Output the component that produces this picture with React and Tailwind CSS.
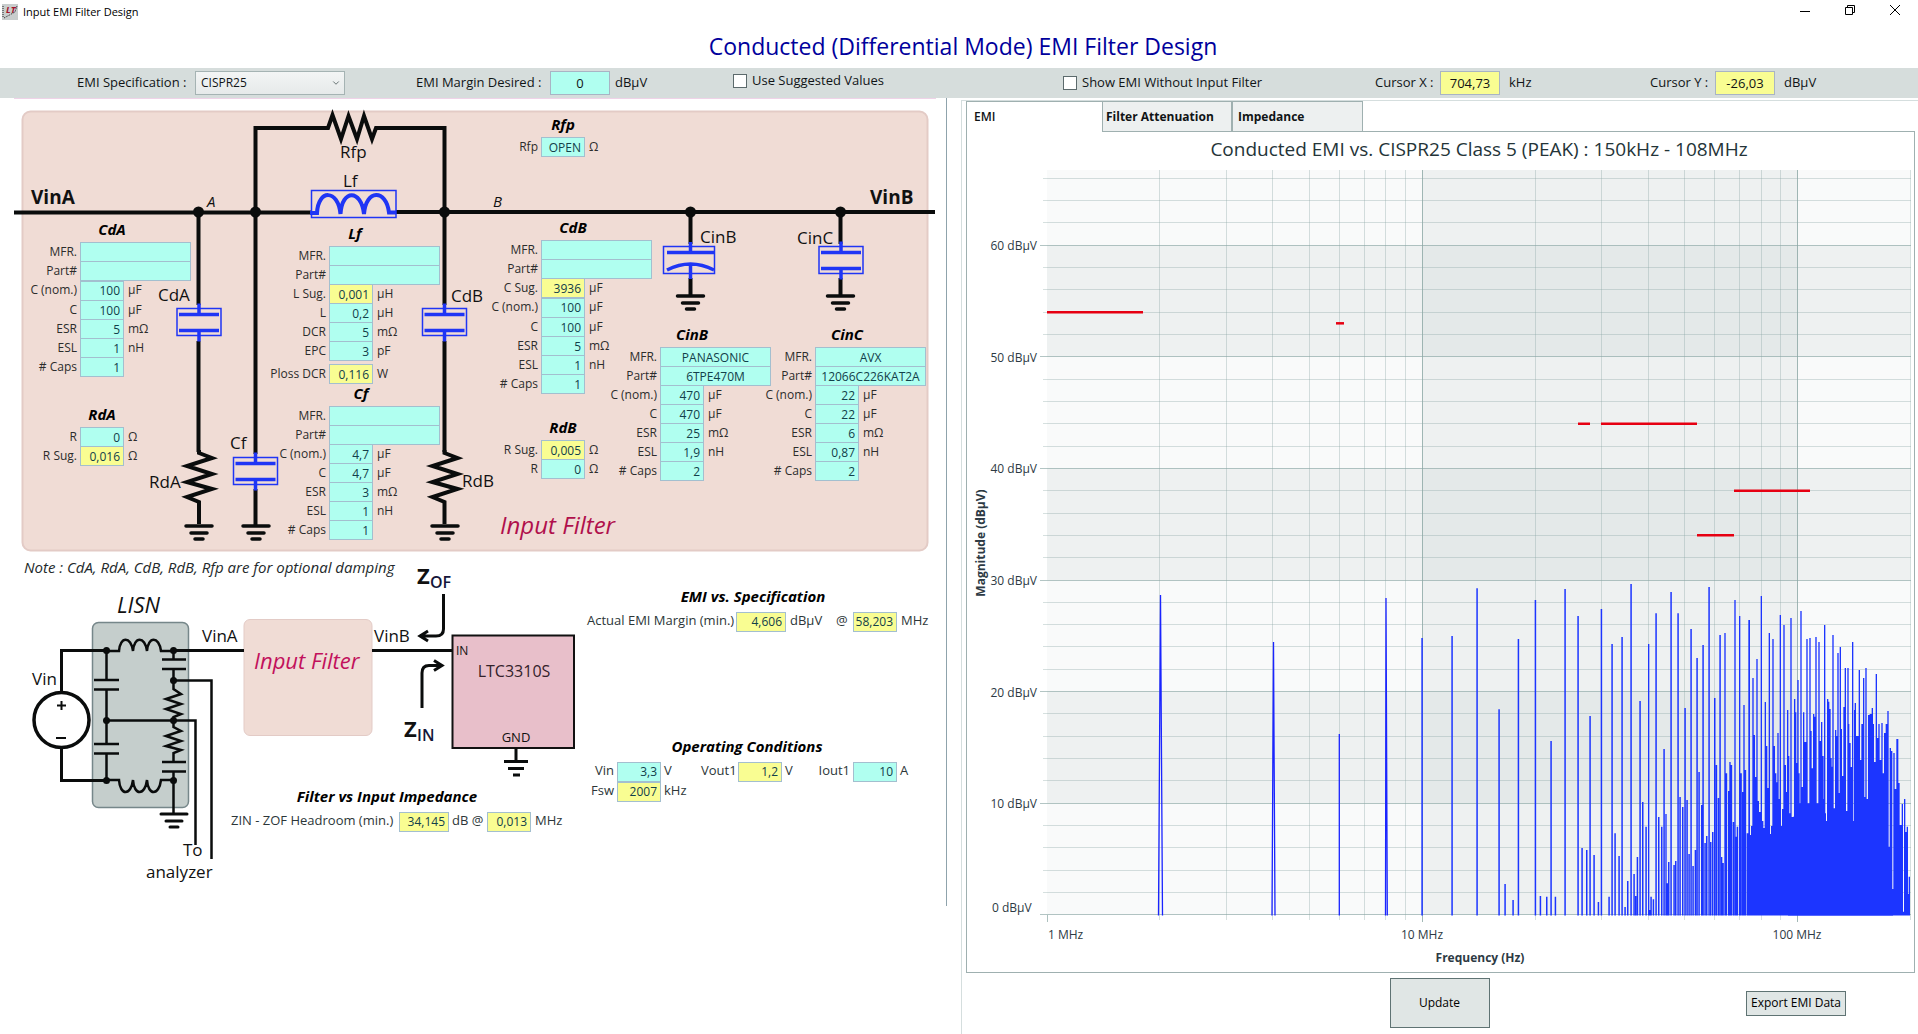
import React, { useId } from "react";
import { ChevronDown } from "lucide-react";

const CYAN = "bg-[#b0fff0]";
const YELLOW = "bg-[#f9fd92]";

/* ---------- small form parts ---------- */

function Box({ id, value, calc, wide, center, width, name }) {
  return (
    <input
      id={id}
      type="text"
      aria-label={name}
      defaultValue={value}
      readOnly={calc}
      className={`-mb-px h-5 shrink-0 border border-[#a3bfcf] p-0 text-xs text-[#12404a] outline-none ${
        calc ? YELLOW : CYAN
      } ${width || (wide ? "w-[111px]" : "w-[44px]")} ${wide || center ? "text-center" : "pr-[3px] text-right"}`}
    />
  );
}

function Row({ label, value, unit, calc, wide, tall, gap }) {
  const id = useId();
  return (
    <div className={`flex items-center ${tall ? "h-5" : "h-[19px]"} ${gap ? "mt-1" : ""}`}>
      <label htmlFor={id} className="w-[78px] shrink-0 pr-[3px] text-right text-xs text-[#2c2c2c]">
        {label}
      </label>
      <Box id={id} value={value} calc={calc} wide={wide} />
      {unit && <span className="pl-1 text-xs text-[#2c2c2c]">{unit}</span>}
    </div>
  );
}

function PartGroup({ title, rows, place, titleWidth = "w-16" }) {
  return (
    <section aria-label={title} className={`absolute ${place}`}>
      <h3 className={`ml-[78px] h-6 text-center text-[15px] leading-[22px] font-bold text-black italic ${titleWidth}`}>{title}</h3>
      {rows.map((r) => (
        <Row key={r.label} {...r} />
      ))}
    </section>
  );
}

const capRows = (nom, c, esr, esl, caps, mfr = "", part = "", tall = false) => [
  { label: "MFR.", value: mfr, wide: true },
  { label: "Part#", value: part, wide: true },
  { label: "C (nom.)", value: nom, unit: "µF", tall },
  { label: "C", value: c, unit: "µF" },
  { label: "ESR", value: esr, unit: "mΩ" },
  { label: "ESL", value: esl, unit: "nH" },
  { label: "# Caps", value: caps },
];

const cdbRows = capRows("100", "100", "5", "1", "1", "", "", true);
cdbRows.splice(2, 0, { label: "C Sug.", value: "3936", unit: "µF", calc: true });

const groups = [
  { title: "Rfp", place: "left-[463px] top-[15px]", titleWidth: "w-11", rows: [{ label: "Rfp", value: "OPEN", unit: "Ω" }] },
  { title: "CdA", place: "left-[2px] top-[120px]", rows: capRows("100", "100", "5", "1", "1", "", "", true) },
  {
    title: "RdA",
    place: "left-[2px] top-[305px]",
    titleWidth: "w-11",
    rows: [
      { label: "R", value: "0", unit: "Ω" },
      { label: "R Sug.", value: "0,016", unit: "Ω", calc: true },
    ],
  },
  {
    title: "Lf",
    place: "left-[251px] top-[124px]",
    titleWidth: "w-[52px]",
    rows: [
      { label: "MFR.", value: "", wide: true },
      { label: "Part#", value: "", wide: true },
      { label: "L Sug.", value: "0,001", unit: "µH", calc: true },
      { label: "L", value: "0,2", unit: "µH" },
      { label: "DCR", value: "5", unit: "mΩ" },
      { label: "EPC", value: "3", unit: "pF" },
      { label: "Ploss DCR", value: "0,116", unit: "W", calc: true, gap: true },
    ],
  },
  { title: "Cf", place: "left-[251px] top-[284px]", rows: capRows("4,7", "4,7", "3", "1", "1") },
  { title: "CdB", place: "left-[463px] top-[118px]", rows: cdbRows },
  {
    title: "RdB",
    place: "left-[463px] top-[318px]",
    titleWidth: "w-11",
    rows: [
      { label: "R Sug.", value: "0,005", unit: "Ω", calc: true },
      { label: "R", value: "0", unit: "Ω" },
    ],
  },
  { title: "CinB", place: "left-[582px] top-[225px]", rows: capRows("470", "470", "25", "1,9", "2", "PANASONIC", "6TPE470M") },
  { title: "CinC", place: "left-[737px] top-[225px]", rows: capRows("22", "22", "6", "0,87", "2", "AVX", "12066C226KAT2A") },
];

/* ---------- schematic ---------- */

const Ground = ({ x, y }) => (
  <path d={`M${x - 13} ${y}h26M${x - 8} ${y + 7}h16M${x - 4} ${y + 13}h8`} />
);

const Cap = ({ x, y }) => (
  <g stroke="#1f35f5" fill="none">
    <rect x={x - 22} y={y} width="44" height="27" strokeWidth="1.5" />
    <path d={`M${x} ${y - 5}v11M${x - 20} ${y + 6}h40M${x - 20} ${y + 22}h40M${x} ${y + 22}v11`} strokeWidth="3.5" />
  </g>
);

const Zig = ({ x, y }) => (
  <path d={`M${x} ${y}l0 3l13 5l-25 8l25 8l-25 8l25 7l-25 8l12 5v22`} strokeLinejoin="miter" />
);

function Schematic() {
  return (
    <svg viewBox="0 98 946 808" className="absolute inset-0 h-full w-full" aria-hidden="true">
      <path d="M14 98.500H936" stroke="#efd3e8" />
      <rect x="22.500" y="111.500" width="905" height="439" rx="8" fill="#f0dcd5" stroke="#e3cbc6" strokeWidth="2" />

      <g fill="none" stroke="#0a0c0c" strokeWidth="4">
        <path d="M14 212.500H312M396 212H935" />
        <path d="M255.500 212V128H328L332.500 115L341 139L348.500 116L357 139L364 116L372 139L376 128H444.500V212" />
        <path d="M198.500 212V305M198.500 341V452M444.500 212V305M444.500 341V452M255.500 212V454M255.500 489V526" />
        <path d="M690.500 212V244M690.500 278V296M840.500 212V244M840.500 278V296" />
        <Zig x={199} y={450} />
        <Zig x={444.5} y={450} />
        <g strokeWidth="3.5" strokeLinecap="round">
          <Ground x={199} y={526} />
          <Ground x={256} y={526} />
          <Ground x={445} y={526} />
          <Ground x={690.5} y={296} />
          <Ground x={840.5} y={296} />
        </g>
      </g>
      <g fill="#0a0c0c">
        {[198, 255, 444, 690, 840].map((x) => (
          <circle key={x} cx={x + 0.5} cy="212" r="5.5" />
        ))}
      </g>

      <Cap x={199} y={308.5} />
      <Cap x={444.5} y={308.5} />
      <Cap x={255.5} y={457.5} />
      <Cap x={841} y={246.5} />
      <g stroke="#1f35f5" fill="none">
        <rect x="663.500" y="246.500" width="51" height="27" strokeWidth="1.5" />
        <path d="M690.500 242V252M667 252.500H715M667 270Q690.500 258 714 270M690.500 264V279" strokeWidth="3.5" />
        <rect x="311.500" y="190.500" width="84.500" height="27" strokeWidth="1.5" />
        <path d="M310 213H317C318 189 338 189 340.500 214C342 189 361 189 364 214C366 189 386 189 389 212.500H396" strokeWidth="4" />
      </g>

      <g fill="#111" fontSize="17">
        <text x="340" y="158">Rfp</text>
        <text x="343" y="187">Lf</text>
        <text x="158" y="301">CdA</text>
        <text x="149" y="488">RdA</text>
        <text x="230" y="449">Cf</text>
        <text x="451" y="302">CdB</text>
        <text x="462" y="487">RdB</text>
        <text x="700" y="243">CinB</text>
        <text x="797" y="244">CinC</text>
        <text x="31" y="204" fontSize="19" fontWeight="700">VinA</text>
        <text x="870" y="204" fontSize="19" fontWeight="700">VinB</text>
        <text x="207" y="207" fontSize="15" fontStyle="italic">A</text>
        <text x="493" y="207" fontSize="15" fontStyle="italic">B</text>
      </g>
      <text x="500" y="534" fontSize="24" fontStyle="italic" fill="#b0104c">Input Filter</text>

      <rect x="244" y="619.500" width="128" height="116" rx="6" fill="#f0dcd5" stroke="#e3cbc6" />
      <text x="254" y="669" fontSize="22" fontStyle="italic" fill="#c2115c">Input Filter</text>

      <rect x="92.500" y="622.500" width="96" height="185" rx="6" fill="#c5cecc" stroke="#76878a" strokeWidth="1.500" />
      <g fill="none" stroke="#0a0c0c">
        <circle cx="61.500" cy="720" r="27.500" strokeWidth="3.5" fill="#fff" />
        <path d="M57 705.500h9M61.500 701v9M56 738h10" strokeWidth="2" />
        <path d="M61.500 692V650.500H106M61.500 748V780.500H106M174 650.500H244M372 650.500H452" strokeWidth="3" />
        <path
          d="M106 651H119C120 636 131 636 133 651C134 636 145 636 147 651C148 636 159 636 161 651H174M106 780H119C120 796 131 796 133 780C134 796 145 796 147 780C148 796 159 796 161 780H174"
          strokeWidth="2.5"
        />
        <path
          d="M106.500 651V680M94 680H119M94 689.500H119M106.500 690V744M94 744H119M94 753.500H119M106.500 754V780M106 720.500H195.500V845M173.500 680.500H211.500V859"
          strokeWidth="2.5"
        />
        <path
          d="M173.500 651V659M162 659.500H186M162 669H186M173.500 669V689L181 694L166 699L181 704L166 709L181 714L173.500 717V727L181 731L166 736L181 741L166 746L181 750L173.500 753V762M162 762H186M162 771.500H186M173.500 772V814"
          strokeWidth="2.5"
        />
        <g strokeWidth="3" strokeLinecap="round">
          <Ground x={174} y={814} />
        </g>
      </g>
      <g fill="#0a0c0c">
        <circle cx="106.500" cy="650.500" r="3.5" />
        <circle cx="173.500" cy="650.500" r="3.5" />
        <circle cx="173.500" cy="680.500" r="3.5" />
        <circle cx="106.500" cy="720.500" r="3.5" />
        <circle cx="173.500" cy="720.500" r="3.5" />
        <circle cx="106.500" cy="780.500" r="3.5" />
        <circle cx="173.500" cy="780.500" r="3.5" />
      </g>

      <rect x="452.500" y="635.500" width="121.500" height="112.500" fill="#e8bfca" stroke="#111" strokeWidth="2" />
      <g fill="none" stroke="#0a0c0c" strokeWidth="3">
        <path d="M516 748V761M504 761.500h24M508 768.500h16M513 775h7" />
        <path d="M443.500 594V629Q443.500 636 436 636H421M428 631L420 636L428 641" />
        <path d="M422 708V673Q422 665.500 429 665.500H441M434 660.500L442 665.500L434 670.500" />
      </g>
      <g fill="#111" fontSize="17">
        <text x="117" y="613" fontSize="22" fontStyle="italic">LISN</text>
        <text x="32" y="685">Vin</text>
        <text x="202" y="642">VinA</text>
        <text x="374" y="642">VinB</text>
        <text x="183" y="856">To</text>
        <text x="146" y="878">analyzer</text>
        <text x="456" y="655" fontSize="12">IN</text>
        <text x="516" y="742" fontSize="13" textAnchor="middle">GND</text>
        <text x="514" y="677" fontSize="16" textAnchor="middle" fill="#33222a">LTC3310S</text>
        <text x="417" y="584" fontSize="22" fontWeight="700">Z</text>
        <text x="430" y="588" fontSize="16" fontWeight="600" fill="#15173a">OF</text>
        <text x="404" y="737" fontSize="22" fontWeight="700">Z</text>
        <text x="417" y="741" fontSize="16" fontWeight="600" fill="#15173a">IN</text>
      </g>
    </svg>
  );
}

const Txt = ({ children, className = "" }) => (
  <span className={`shrink-0 whitespace-nowrap text-[13px] text-[#2c3638] ${className}`}>{children}</span>
);

function Readouts() {
  const h = "text-center text-[15px] leading-[22px] font-bold text-black italic";
  return (
    <>
      <p className="absolute top-[458px] left-[24px] text-[15px] leading-[22px] whitespace-nowrap text-[#23292b] italic">
        Note : CdA, RdA, CdB, RdB, Rfp are for optional damping
      </p>

      <section className="absolute top-[487px] left-[587px]">
        <h3 className={`w-[332px] ${h}`}>EMI vs. Specification</h3>
        <div className="mt-1 flex h-5 items-center">
          <Txt className="w-[149px]">Actual EMI Margin (min.)</Txt>
          <Box value="4,606" calc width="w-[50px]" name="Actual EMI margin in dBµV" />
          <Txt className="w-[50px] pl-1">dBµV</Txt>
          <Txt className="w-[17px]">@</Txt>
          <Box value="58,203" calc width="w-[44px]" name="Frequency of smallest margin in MHz" />
          <Txt className="pl-1">MHz</Txt>
        </div>
      </section>

      <section className="absolute top-[637px] left-[587px]">
        <h3 className={`w-[320px] ${h}`}>Operating Conditions</h3>
        <div className="mt-1 flex items-start">
          <div>
            {[
              ["Vin", "3,3", "V", false],
              ["Fsw", "2007", "kHz", true],
            ].map(([l, v, u, calc]) => (
              <div key={l} className="flex h-5 items-center">
                <Txt className="w-[30px] pr-[3px] text-right">{l}</Txt>
                <Box value={v} calc={calc} name={l} />
                <Txt className="w-[40px] pl-[3px]">{u}</Txt>
              </div>
            ))}
          </div>
          <div className="flex h-5 items-center">
            <Txt className="w-[37px] pr-[3px] text-right">Vout1</Txt>
            <Box value="1,2" calc name="Vout1" />
            <Txt className="w-[34px] pl-[3px]">V</Txt>
            <Txt className="w-[37px] pr-[3px] text-right">Iout1</Txt>
            <Box value="10" name="Iout1" />
            <Txt className="pl-[3px]">A</Txt>
          </div>
        </div>
      </section>

      <section className="absolute top-[687px] left-[231px]">
        <h3 className={`w-[312px] ${h}`}>Filter vs Input Impedance</h3>
        <div className="mt-1 flex h-5 items-center">
          <Txt className="w-[168px]">ZIN - ZOF Headroom (min.)</Txt>
          <Box value="34,145" calc width="w-[50px]" name="Headroom in dB" />
          <Txt className="w-[38px] pl-[3px]">dB @</Txt>
          <Box value="0,013" calc name="Frequency of smallest headroom in MHz" />
          <Txt className="pl-1">MHz</Txt>
        </div>
      </section>
    </>
  );
}

/* ---------- spectrum chart ---------- */

const X0 = 1047;
const DEC = 375.3;
const Y0 = 914.8;
const DB = 11.16;
const fx = (mhz) => X0 + DEC * Math.log10(mhz);
const fy = (db) => Y0 - DB * db;

/* Pairs of horizontal position and peak height, in thirds of a unit from (1440, 560). */
const peaks = [
  -54,234,36,228,111,85,177,448,195,972,219,1020,235,237,286,120,301,1008,320,1010,333,543,346,1010,375,87,414,168,426,864,440,870,
  450,468,462,885,475,1026,484,147,507,1010,516,252,525,820,537,888,546,231,555,1041,563,963,573,72,582,942,587,1008,592,891,600,423,608,726,618,800,
  626,252,630,1050,633,1010,640,1018,648,160,656,771,665,800,672,567,678,762,682,970,686,906,693,96,702,915,707,903,714,160,720,711,728,741,735,444,
  741,720,747,882,753,207,759,918,766,870,771,294,777,636,785,735,789,255,795,849,800,828,807,81,812,846,818,816,824,414,829,615,835,714,
  840,225,845,891,849,909,855,219,859,640,866,693,870,606,874,615,880,786,885,120,889,830,892,800,899,168,903,640,908,696,912,435,916,630,922,820,
  927,180,932,825,935,798,939,354,943,525,947,651,951,297,955,723,959,756,964,108,967,783,972,804,976,426,980,558,984,684,988,219,
  992,822,995,798,999,237,1003,558,1006,640,1011,667,1014,519,1018,717,1021,165,1025,798,1028,747,1032,195,1036,615,1040,696,1043,450,
  1046,588,1049,760,1053,174,1057,771,1061,770,1064,417,1067,457,1070,609,1074,360,1077,640,1080,730,1083,153,1086,681,1091,457,1095,546,1101,237,
  1104,730,1110,234,1113,513,1117,625,1121,462,1124,470,1128,231,1131,730,1137,246,1140,543,1145,486,1149,588,1151,717,1154,195,1156,760,1159,783,1163,417,
  1166,425,1170,447,1173,594,1175,620,1179,225,1182,745,1187,510,1190,528,1194,279,1197,699,1201,261,1204,507,1207,648,1212,441,1216,324,
  1219,753,1224,324,1226,492,1230,549,1234,621,1235,717,1238,246,1240,783,1244,450,1246,429,1249,528,1254,528,1258,330,1261,600,1266,492,1271,354,
  1274,711,1278,324,1281,717,1286,465,1291,462,1297,444,1300,492,1303,606,1309,342,1312,534,1317,492,1321,600,1326,489,1330,640,1334,519,
  1339,492,1344,453,1347,860,1351,564,1355,573,1357,987,1362,579,1366,687,1371,537,1377,669,1381,795,1387,732,1390,1055,1394,717,1398,816,
  1402,800,1405,1002,1408,950,
];

function spectrumPath() {
  let d = "";
  for (let i = 0; i < peaks.length; i += 2) {
    const z = peaks[i];
    const next = i + 2 < peaks.length ? peaks[i + 2] : z + 2;
    const gap = next - z;
    const w = z > 920 ? Math.max(4, Math.min(gap, 6)) : Math.min(gap, 4.5);
    const x = 1440 + (z - 2) / 3;
    const y = 560 + peaks[i + 1] / 3;
    d += `M${x.toFixed(2)} 915.500V${y.toFixed(2)}h${(w / 3).toFixed(2)}V915.500z`;
  }
  return d;
}

const minors = [2, 3, 4, 5, 6, 7, 8, 9, 20, 30, 40, 50, 60, 70, 80, 90, 200];
const limits = [
  [1047, 1143, 54],
  [1336, 1344, 53],
  [1578, 1590, 44],
  [1601, 1697, 44],
  [1697, 1734, 34],
  [1734, 1810, 38],
];

function EmiChart() {
  return (
    <svg viewBox="967 132 947 840" className="block w-full" role="img" aria-label="Conducted EMI spectrum">
      <text x="1479" y="156" textAnchor="middle" fontSize="19" fill="#243438">
        Conducted EMI vs. CISPR25 Class 5 (PEAK) : 150kHz - 108MHz
      </text>

      <rect x={X0} y="170" width="863" height="745" fill="#f9fafa" />
      {[50, 30, 10].map((b) => (
        <rect key={b} x={X0} y={fy(b + 10)} width="863" height={DB * 10} fill="#7f9795" opacity="0.085" />
      ))}
      <rect x={fx(10)} y="170" width={DEC} height="745" fill="#7f9795" opacity="0.085" />

      <g stroke="#8ba7a5" shapeRendering="crispEdges">
        {Array.from({ length: 34 }, (_, i) => i * 2).map((v) => (
          <path key={v} d={`M${v % 10 ? 1043 : 1040} ${fy(v)}H1911`} opacity={v % 10 ? 0.35 : 0.65} />
        ))}
        {minors.map((m) => (
          <path key={m} d={`M${fx(m)} 170V920`} opacity="0.35" />
        ))}
        <path d={`M${fx(10)} 170V922M${fx(100)} 170V922`} opacity="0.8" />
        <path d={`M${X0} 915V922`} opacity="0.7" />
      </g>

      {limits.map(([a, b, v]) => (
        <path key={a + "-" + v} d={`M${a} ${fy(v)}H${b}`} stroke="#e60012" strokeWidth="2.5" />
      ))}

      <path d="M1788 915.500L1793 837L1806 827H1853L1884 846L1889 890L1893 915.500z" fill="#1c35ff" />
      <path d={spectrumPath()} fill="#1c35ff" />
      <path
        d="M1158.500 915.500L1160.500 595L1162.500 915.500M1272 915.500L1273.500 642L1275 915.500M1339.300 734V915.500M1385.500 915.500L1386 598L1387.300 915.500"
        fill="none"
        stroke="#1a24ff"
        strokeWidth="1.300"
      />

      <g fontSize="12" fill="#2d3a44">
        {[60, 50, 40, 30, 20, 10].map((v) => (
          <text key={v} x="1037" y={fy(v) + 5} textAnchor="end">{v} dBµV</text>
        ))}
        <text x="992" y="912">0 dBµV</text>
        <text x="1048" y="939">1 MHz</text>
        <text x="1422" y="939" textAnchor="middle">10 MHz</text>
        <text x="1797" y="939" textAnchor="middle">100 MHz</text>
        <text x="1480" y="962" textAnchor="middle" fontWeight="700">Frequency (Hz)</text>
        <text transform="translate(985 543) rotate(-90)" textAnchor="middle" fontWeight="700">Magnitude (dBµV)</text>
      </g>
    </svg>
  );
}

/* ---------- window frame ---------- */

function TitleBar() {
  return (
    <header className="flex h-6 items-center pl-[2px]">
      <svg viewBox="0 0 16 16" className="h-4 w-4 overflow-visible" aria-hidden="true">
        <rect width="16" height="16" fill="#c9cdcd" />
        <text x="4" y="9" fontSize="9" fontWeight="700" fontStyle="italic" fill="#a3122a">LT</text>
        <path d="M1 2V13M2 14L13 8L15 2" fill="none" stroke="#222" strokeDasharray="1 1" />
      </svg>
      <span className="ml-[5px] text-[11px] text-black">Input EMI Filter Design</span>
      <div className="ml-auto flex pr-[1px]">
        <button type="button" aria-label="Minimize" className="flex h-6 w-[45px] items-center justify-center">
          <svg viewBox="0 0 12 12" className="h-3 w-3"><path d="M1 5.500h10" stroke="#000" /></svg>
        </button>
        <button type="button" aria-label="Restore" className="flex h-6 w-[45px] items-center justify-center pb-1">
          <svg viewBox="0 0 12 12" className="h-3 w-3">
            <path d="M1.500 3.500h7v7h-7zM3.500 3V1.500h7v7H9" fill="none" stroke="#000" />
          </svg>
        </button>
        <button type="button" aria-label="Close" className="flex h-6 w-[45px] items-center justify-center pb-1">
          <svg viewBox="0 0 12 12" className="h-3 w-3"><path d="M1 1l10 10M11 1L1 11" stroke="#000" /></svg>
        </button>
      </div>
    </header>
  );
}

function ToolField({ label, labelWidth, value, unit, calc, unitGap, className }) {
  const id = useId();
  return (
    <div className={`flex items-center ${className}`}>
      <label htmlFor={id} className={`shrink-0 whitespace-nowrap ${labelWidth}`}>{label}</label>
      <input
        id={id}
        type="text"
        defaultValue={value}
        readOnly={calc}
        className={`h-6 w-[60px] border border-[#a9b4c4] p-0 text-center outline-none ${calc ? YELLOW : CYAN}`}
      />
      <span className={unitGap}>{unit}</span>
    </div>
  );
}

const Check = ({ label, className }) => (
  <label className={`flex items-center gap-[5px] whitespace-nowrap ${className}`}>
    <input type="checkbox" className="h-[14px] w-[14px] appearance-none border border-[#5c6a6c] bg-white" />
    {label}
  </label>
);

function Toolbar() {
  return (
    <div className="grid h-[30px] grid-cols-[962px_1fr] bg-[#d6dddc] text-[13px] text-[#101416]">
      <div className="flex items-center pl-[77px]">
        <div className="flex w-[339px] items-center">
          <label htmlFor="spec" className="w-[118px]">EMI Specification :</label>
          <span className="relative">
            <select
              id="spec"
              defaultValue="CISPR25"
              className="h-6 w-[150px] appearance-none border border-[#a5b3b3] bg-linear-to-b from-[#f3f5f5] to-[#e6eaea] pl-[5px] text-xs outline-none"
            >
              <option>CISPR25</option>
            </select>
            <ChevronDown className="pointer-events-none absolute top-[7px] right-[4px] h-[10px] w-[10px] text-[#4d5a5c]" />
          </span>
        </div>
        <ToolField label="EMI Margin Desired :" labelWidth="w-[134px]" value="0" unit="dBµV" unitGap="pl-[5px]" className="w-[317px]" />
        <Check label="Use Suggested Values" className="pb-1" />
      </div>
      <div className="flex items-center pl-[101px]">
        <Check label="Show EMI Without Input Filter" className="w-[312px]" />
        <ToolField label="Cursor X :" labelWidth="w-[65px]" value="704,73" unit="kHz" unitGap="pl-[9px]" calc className="w-[275px]" />
        <ToolField label="Cursor Y :" labelWidth="w-[65px]" value="-26,03" unit="dBµV" unitGap="pl-[9px]" calc className="" />
      </div>
    </div>
  );
}

function ResultPane() {
  const tab = "h-[30px] border border-b-0 border-[#9fb0b0] text-left text-xs font-bold text-[#101416]";
  return (
    <div className="mt-[2px] border-t border-l border-[#d5dede] pr-[3px] pl-1">
      <div role="tablist" className="flex items-end">
        <button type="button" role="tab" aria-selected="true" className="-mb-px h-[31px] w-[137px] border border-b-0 border-[#9fb0b0] bg-white px-[7px] text-left text-xs font-semibold text-[#101416]">
          EMI
        </button>
        <button type="button" role="tab" aria-selected="false" className={`w-[129px] border-l-0 bg-[#edf0f0] px-[3px] ${tab}`}>
          Filter Attenuation
        </button>
        <button type="button" role="tab" aria-selected="false" className={`w-[131px] bg-[#edf0f0] px-[5px] ${tab}`}>
          Impedance
        </button>
      </div>
      <div role="tabpanel" className="border border-[#9fb0b0] bg-white">
        <EmiChart />
      </div>
      <div className="mt-[5px] grid grid-cols-[1fr_100px_1fr] items-center pr-[2px]">
        <button type="button" className="col-start-2 h-[50px] border border-[#5f7373] bg-[#e0e6e5] text-xs text-black">
          Update
        </button>
        <button type="button" className="mr-[67px] h-[25px] w-[100px] justify-self-end border border-[#5f7373] bg-[#e0e6e5] text-xs whitespace-nowrap text-black">
          Export EMI Data
        </button>
      </div>
    </div>
  );
}

export default function App() {
  return (
    <div className='flex min-h-screen flex-col bg-white font-["Open_Sans","Noto_Sans",sans-serif]'>
      <TitleBar />
      <h1 className="flex h-11 items-center justify-center pl-[8px] text-[23px] text-[#00009c]">
        Conducted (Differential Mode) EMI Filter Design
      </h1>
      <Toolbar />
      <main className="grid grow grid-cols-[961px_1fr]">
        <div>
          <div className="relative h-[808px] w-[947px] border-r border-[#8fa3ac]">
            <Schematic />
            {groups.map((g) => (
              <PartGroup key={g.title} {...g} />
            ))}
            <Readouts />
          </div>
        </div>
        <ResultPane />
      </main>
    </div>
  );
}
